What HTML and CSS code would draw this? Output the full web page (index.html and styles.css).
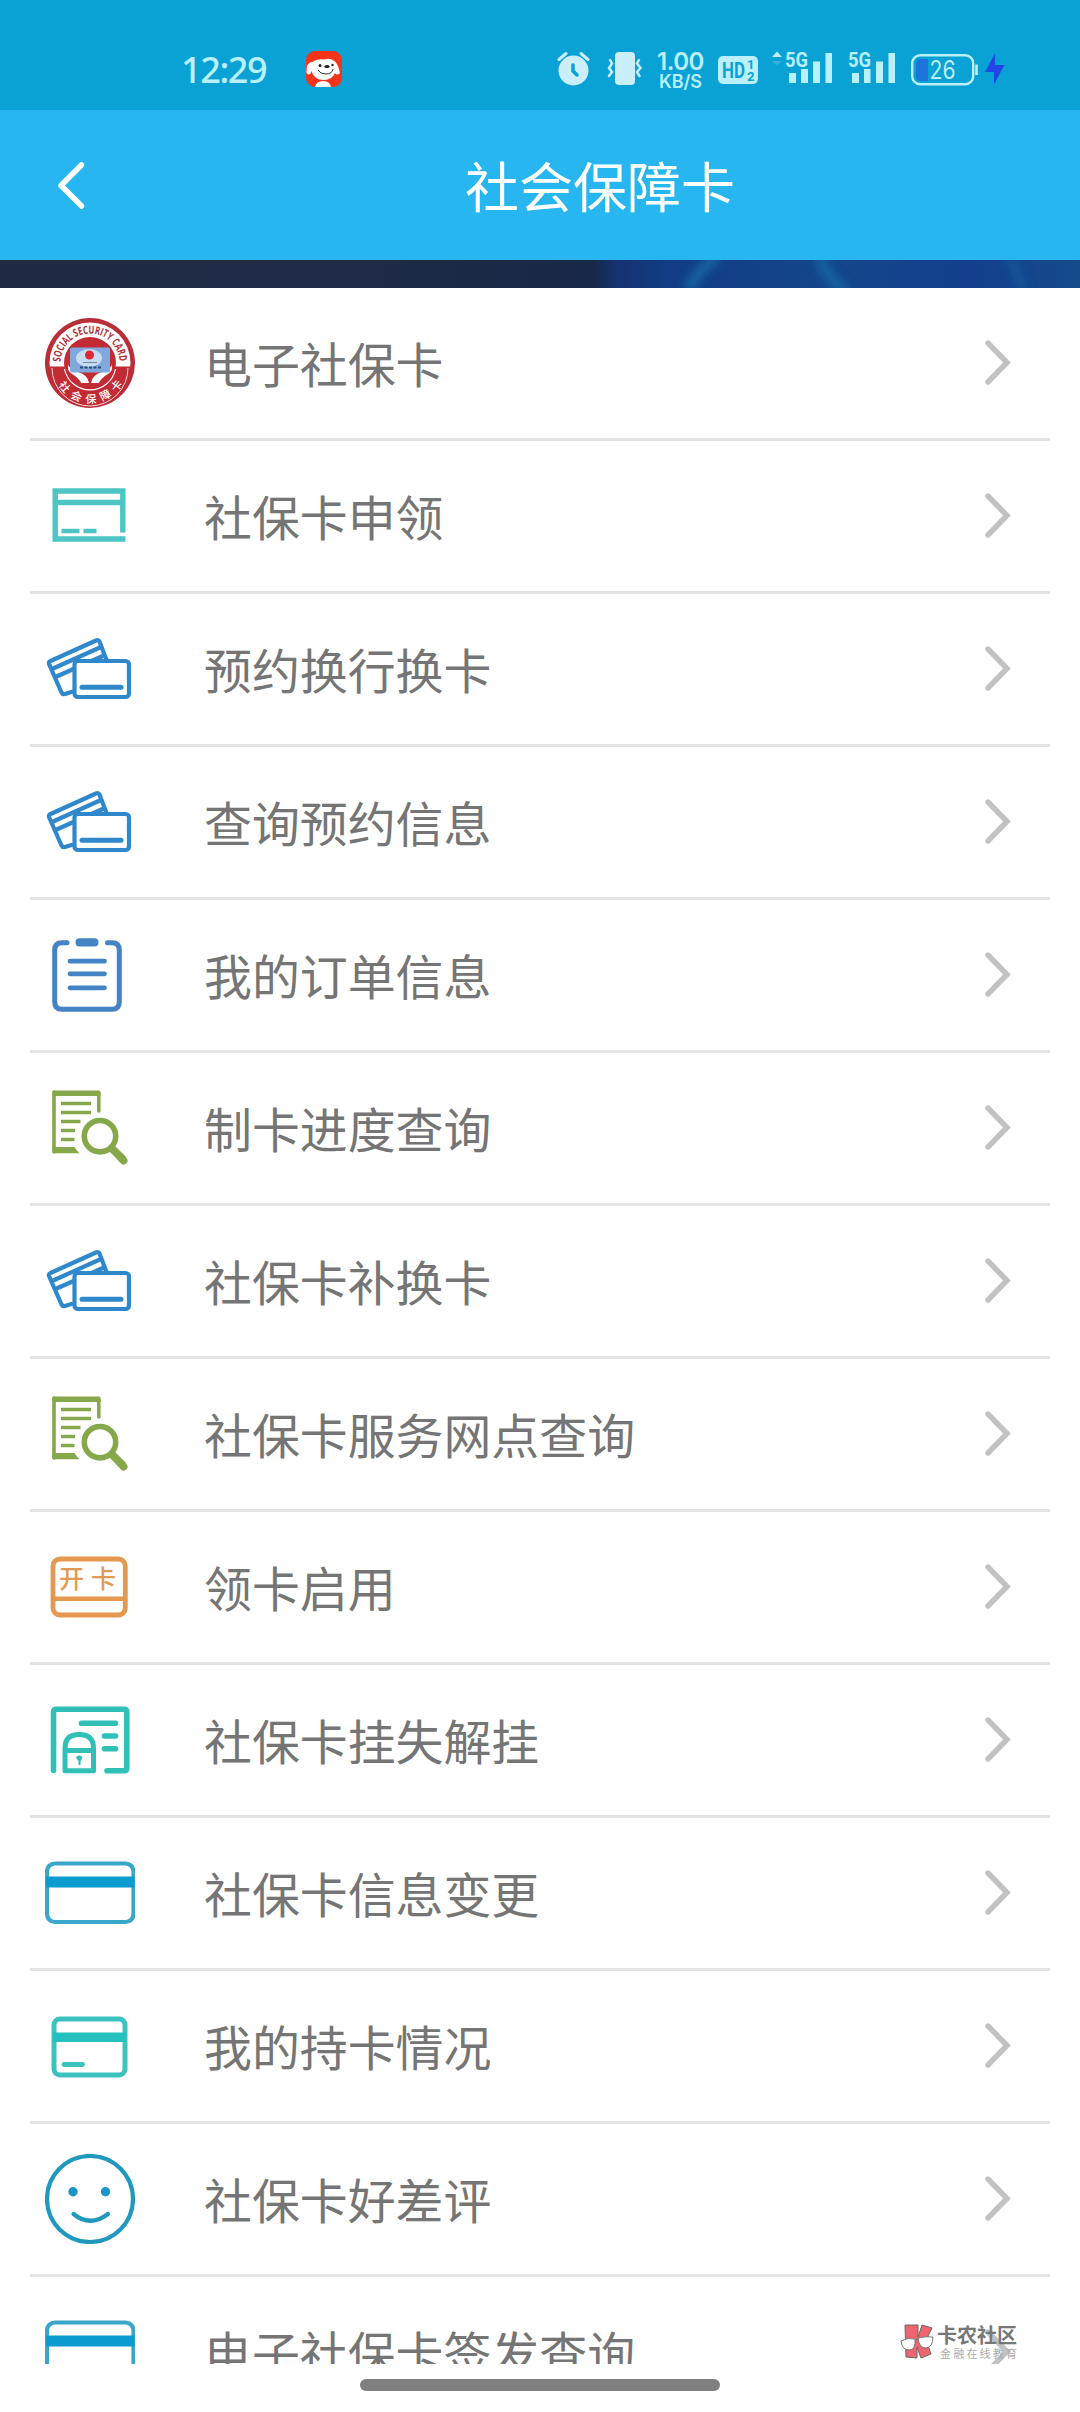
FILE: index.html
```html
<!DOCTYPE html>
<html lang="zh-CN">
<head>
    <meta charset="UTF-8">
    <meta name="viewport" content="width=device-width, initial-scale=1.0">
    <title>社会保障卡</title>
    <link rel="stylesheet" href="styles.css">
</head>
<body>
    <!-- shared icons -->
    <svg class="defs" width="0" height="0">
        <symbol id="arrow" viewBox="0 0 30 50">
            <path d="M5 5 L24 24.500 L5 44" fill="none" stroke="#c2c2c2" stroke-width="5.400" stroke-linecap="round"/>
        </symbol>
        <symbol id="cards" viewBox="0 0 90 90">
            <g fill="none" stroke="#2f88cc" stroke-width="4.200" stroke-linejoin="round">
                <path d="M28 67.500 L20 70 Q17.500 70.500 16.500 68.500 L4 40 Q3.500 38 5.500 37 L51 16.500 Q53.500 15.500 54.500 17.500 L61.500 36"/>
                <path d="M7 45 L56 23 M10.500 53 L60 31"/>
                <rect x="29.500" y="37" width="54.500" height="36" rx="3.500" fill="#fff"/>
                <path d="M37 63.300 H76" stroke-width="5" stroke-linecap="round"/>
            </g>
        </symbol>
        <symbol id="search" viewBox="0 0 90 90">
            <g fill="none" stroke="#87a84a">
                <path d="M9 9 V69 M53.800 10 V28" stroke-width="3.600" stroke-linecap="round"/>
                <path d="M9 7.500 H54 Q55.500 7.500 55.500 9.500 V13 H7.500 V9.500 Q7.500 7.500 9 7.500Z M7.500 64 H29.500 Q31.500 67.500 34.500 70.200 H9 Q7.500 70.200 7.500 68Z" fill="#87a84a" stroke="none"/>
                <path d="M16 20.500 H46 M16 29.500 H46 M16 38.500 H35.500 M16 47.500 H30 M16 56.500 H29.500" stroke-width="3.700"/>
                <circle cx="55" cy="53.200" r="15.700" stroke-width="5.600"/>
                <path d="M66.500 65 L78 76.500" stroke-width="8"/>
                <path d="M75.500 74 L78.500 77.500" stroke-width="8" stroke-linecap="round"/>
            </g>
        </symbol>
        <symbol id="bankcard" viewBox="0 0 90 90">
            <rect x="2" y="15.500" width="86.500" height="58.500" rx="8" fill="none" stroke="#3aa6c9" stroke-width="4.200"/>
            <rect x="1" y="28.500" width="88.500" height="11" fill="#0c9ccf"/>
        </symbol>
    </svg>

    <div class="status-bar">
        <div class="time">12:29</div>
        <svg class="app-icon" width="36" height="36" viewBox="0 0 36 36">
            <rect width="36" height="36" rx="9" fill="#f5331b"/>
            <path d="M6 11 Q11 7.500 18 8.500 Q25 6.500 29 10.500 Q32 13 34 22 Q31 25 29 22 Q26 29 18 29 Q8 29 5.500 20 Q4 26 0.500 22 Q0 11 6 11Z" fill="#fff"/>
            <path d="M9 36 Q10 30 17 30 Q24 30 25 36Z" fill="#fff"/>
            <path d="M12 19 Q14 23 20 23 Q26 23 27 18" fill="none" stroke="#333" stroke-width="1"/>
            <ellipse cx="21" cy="15.500" rx="2.800" ry="1.600" fill="#222"/>
            <circle cx="14" cy="14.500" r="1.500" fill="#222"/>
            <circle cx="26.500" cy="14" r="1.200" fill="#222"/>
        </svg>
        <div class="status-icons">
            <svg width="33" height="36" viewBox="0 0 33 36">
                <circle cx="16.500" cy="19.500" r="15" fill="#caeefa"/>
                <path d="M2 8.500 L9 2.500 M24 2.500 L31 8.500" stroke="#caeefa" stroke-width="3" stroke-linecap="round"/>
                <path d="M16 14 V20 L20 24" fill="none" stroke="#0aa2d5" stroke-width="3.500" stroke-linecap="round"/>
            </svg>
            <svg class="vibrate" width="36" height="36" viewBox="0 0 36 36">
                <rect x="8" y="1" width="20" height="33" rx="4" fill="#caeefa"/>
                <path d="M3 9 L5 12.500 L2 17 L5 21 L2 25 M32 9 L30 12.500 L33.500 17 L30 21 L32.500 25" fill="none" stroke="#caeefa" stroke-width="2.500" stroke-linecap="round"/>
            </svg>
            <div class="speed"><span class="num">1.00</span><span class="unit">KB/S</span></div>
            <svg class="hd" width="40" height="36" viewBox="0 0 40 36">
                <rect y="5" width="40" height="28" rx="5" fill="#b9f0fc"/>
                <text x="4" y="27" class="hd-text" textLength="23" lengthAdjust="spacingAndGlyphs">HD</text>
                <text x="29" y="18" class="sim">1</text>
                <text x="29" y="30" class="sim">2</text>
            </svg>
            <svg class="signal" width="62" height="36" viewBox="0 0 62 36">
                <path d="M0 6 L5 0.500 L10 6Z" fill="#b9edfb"/>
                <path d="M0 10 L5 14 L10 10Z" fill="#34b4dd"/>
                <text x="13" y="16" class="net" textLength="23" lengthAdjust="spacingAndGlyphs">5G</text>
                <path d="M17 22 h7 v10 h-7z M29 18 h7 v14 h-7z M41 10.500 h7 v21.500 h-7z M53.500 2 h6.500 v30 h-6.500z" fill="#b9f0fc"/>
            </svg>
            <svg class="signal2" width="49" height="36" viewBox="0 0 49 36">
                <text x="0" y="16" class="net" textLength="23" lengthAdjust="spacingAndGlyphs">5G</text>
                <path d="M4 22 h7 v10 h-7z M16 18 h6.500 v14 h-6.500z M28 10.500 h7 v21.500 h-7z M40.500 2 h6.500 v30 h-6.500z" fill="#b9f0fc"/>
            </svg>
            <svg class="battery" width="94" height="36" viewBox="0 0 94 36">
                <rect x="1.200" y="4.200" width="61" height="29" rx="8" fill="none" stroke="#b9f0fc" stroke-width="2.400"/>
                <path d="M17 8 V30 H10 Q5 30 5 25 V13 Q5 8 10 8Z" fill="#1f74dc"/>
                <path d="M65.500 13.500 V24" stroke="#b9f0fc" stroke-width="2.600"/>
                <text x="18.500" y="27.500" class="level" textLength="26" lengthAdjust="spacingAndGlyphs">26</text>
                <path d="M84 2.500 L74 21 H83 V33.500 L93.500 14 H84Z" fill="#2046e6"/>
            </svg>
        </div>
    </div>

    <div class="header">
        <svg class="back" width="30" height="48" viewBox="0 0 30 48">
            <path d="M25.500 4 L5 24.500 L25.500 45" fill="none" stroke="#fff" stroke-width="5.500" stroke-linecap="round" stroke-linejoin="round"/>
        </svg>
        <h1>社会保障卡</h1>
    </div>

    <svg class="banner" width="1080" height="28" viewBox="0 0 1080 28">
        <defs>
            <linearGradient id="night" x1="0" x2="1" y1="0" y2="0">
                <stop offset="0" stop-color="#1f2943"/>
                <stop offset="0.300" stop-color="#1f2a46"/>
                <stop offset="0.550" stop-color="#182848"/>
                <stop offset="0.570" stop-color="#153270"/>
                <stop offset="0.620" stop-color="#123d86"/>
                <stop offset="0.780" stop-color="#14468b"/>
                <stop offset="0.900" stop-color="#133f8e"/>
                <stop offset="1" stop-color="#164b8a"/>
            </linearGradient>
            <filter id="glow"><feGaussianBlur stdDeviation="5"/></filter>
        </defs>
        <rect width="1080" height="28" fill="url(#night)"/>
        <g fill="none" stroke="#1463a1" stroke-width="11" filter="url(#glow)">
            <path d="M688 30 Q698 10 718 -4"/>
            <path d="M820 -4 Q824 16 846 32"/>
            <path d="M1010 -4 L1024 30" opacity="0.500"/>
        </g>
    </svg>

    <div class="list">
        <div class="item">
            <svg class="icon" viewBox="0 0 90 90">
                <circle cx="45" cy="45" r="45" fill="#b92f39"/>
                <circle cx="45" cy="45" r="40.500" fill="#fff"/>
                <path d="M4.500 48.500 H85.500 A40.500 40.500 0 0 1 4.500 48.500Z" fill="#c22a34"/>
                <path d="M7 50 A38 38 0 0 0 83 50" fill="none" stroke="#f6dcdc" stroke-width="1"/>
                <circle cx="45" cy="45" r="26" fill="#c22a34"/>
                <path d="M19.500 51 A26 26 0 0 0 70.500 51" fill="none" stroke="#fff" stroke-width="1.200"/>
                <path d="M24 46 Q22 50 33 54 Q43 57 44 65 H36 Q34 60 27 56 Q21 52 24 46Z M66 46 Q68 50 57 54 Q47 57 46 65 H54 Q56 60 63 56 Q69 52 66 46Z" fill="#fff"/>
                <rect x="25" y="29.500" width="40" height="25" rx="2" fill="#7fa9dc"/>
                <ellipse cx="44" cy="40" rx="13" ry="9" fill="#c7dcf3"/>
                <circle cx="44.500" cy="37" r="4.500" fill="#dd2837"/>
                <path d="M38 44.500 H52" stroke="#758aa8" stroke-width="1"/>
                <path d="M35 49.500 H56" stroke="#2b4872" stroke-width="2" stroke-dasharray="3 1.500"/>
                <path id="arcTop" d="M15.500 45 A29.500 29.500 0 0 1 74.500 45" fill="none"/>
                <path id="arcBottom" d="M8 48 A37 37 0 0 0 82 48" fill="none"/>
                <text class="seal-en"><textPath href="#arcTop" startOffset="1" textLength="90" lengthAdjust="spacingAndGlyphs">SOCIAL SECURITY CARD</textPath></text>
                <text class="seal-cn"><textPath href="#arcBottom" startOffset="20" textLength="78">社会保障卡</textPath></text>
            </svg>
            <span class="name">电子社保卡</span>
            <svg class="arrow"><use href="#arrow"/></svg>
        </div>
        <div class="item">
            <svg class="icon" viewBox="0 0 90 90">
                <g fill="none" stroke="#4cc5c4" stroke-width="5.400">
                    <path d="M80.500 68 H10.200 V20 H77.800 V61.500"/>
                    <path d="M10 31.500 H78" stroke-width="5.500"/>
                    <path d="M16.500 60 H34.500 M38.500 60 H51.500" stroke-width="4.400"/>
                </g>
            </svg>
            <span class="name">社保卡申领</span>
            <svg class="arrow"><use href="#arrow"/></svg>
        </div>
        <div class="item">
            <svg class="icon"><use href="#cards"/></svg>
            <span class="name">预约换行换卡</span>
            <svg class="arrow"><use href="#arrow"/></svg>
        </div>
        <div class="item">
            <svg class="icon"><use href="#cards"/></svg>
            <span class="name">查询预约信息</span>
            <svg class="arrow"><use href="#arrow"/></svg>
        </div>
        <div class="item">
            <svg class="icon" viewBox="0 0 90 90">
                <g fill="none" stroke="#4484c4" stroke-width="5" stroke-linecap="round">
                    <path d="M22 12.700 H17 Q9.700 12.700 9.700 20 V72 Q9.700 79.300 17 79.300 H67 Q74.300 79.300 74.300 72 V20 Q74.300 12.700 67 12.700 H62.500"/>
                    <path d="M25 31.200 H59.500 M25 43.800 H59.500 M25 57.800 H59.500" stroke-width="4.800"/>
                </g>
                <rect x="30.500" y="8.200" width="23" height="8.200" rx="4" fill="#4484c4"/>
            </svg>
            <span class="name">我的订单信息</span>
            <svg class="arrow"><use href="#arrow"/></svg>
        </div>
        <div class="item">
            <svg class="icon"><use href="#search"/></svg>
            <span class="name">制卡进度查询</span>
            <svg class="arrow"><use href="#arrow"/></svg>
        </div>
        <div class="item">
            <svg class="icon"><use href="#cards"/></svg>
            <span class="name">社保卡补换卡</span>
            <svg class="arrow"><use href="#arrow"/></svg>
        </div>
        <div class="item">
            <svg class="icon"><use href="#search"/></svg>
            <span class="name">社保卡服务网点查询</span>
            <svg class="arrow"><use href="#arrow"/></svg>
        </div>
        <div class="item">
            <svg class="icon" viewBox="0 0 90 90">
                <g fill="none" stroke="#e39a50" stroke-width="4.800">
                    <rect x="8" y="17" width="72.300" height="56" rx="7"/>
                    <path d="M8 56.800 H80" stroke-width="4.400"/>
                </g>
                <text x="14" y="46" class="open-card">开卡</text>
            </svg>
            <span class="name">领卡启用</span>
            <svg class="arrow"><use href="#arrow"/></svg>
        </div>
        <div class="item">
            <svg class="icon" viewBox="0 0 90 90">
                <g fill="none" stroke="#30c0b8" stroke-width="5.600" stroke-linecap="round" stroke-linejoin="round">
                    <path d="M8.500 75.500 V17 Q8.500 14.200 11.500 14.200 H79 Q81.800 14.200 81.800 17 V73 Q81.800 75.700 79 75.700 H62"/>
                    <path d="M36.500 28.300 H70.500 M59.500 41 H70.500 M59.500 53.700 H70.500"/>
                    <path d="M20 75.700 V53 Q20 39.500 34 39.500 Q48.500 39.500 48.500 53 V75.700Z M20 55.500 H48" stroke-width="5"/>
                </g>
                <path d="M31 63 A3.400 3.400 0 0 1 37.500 63 L35.500 66 V70 H33.500 V66Z" fill="#30c0b8"/>
            </svg>
            <span class="name">社保卡挂失解挂</span>
            <svg class="arrow"><use href="#arrow"/></svg>
        </div>
        <div class="item">
            <svg class="icon"><use href="#bankcard"/></svg>
            <span class="name">社保卡信息变更</span>
            <svg class="arrow"><use href="#arrow"/></svg>
        </div>
        <div class="item">
            <svg class="icon" viewBox="0 0 90 90">
                <rect x="9" y="18" width="71" height="56" rx="6" fill="none" stroke="#3cc2bf" stroke-width="5"/>
                <rect x="8" y="31.500" width="73" height="9.500" fill="#25c1be"/>
                <path d="M19 63.500 H37.500" stroke="#3cc2bf" stroke-width="4.800" stroke-linecap="round"/>
            </svg>
            <span class="name">我的持卡情况</span>
            <svg class="arrow"><use href="#arrow"/></svg>
        </div>
        <div class="item">
            <svg class="icon" viewBox="0 0 90 90">
                <circle cx="45" cy="45" r="43" fill="none" stroke="#2199bf" stroke-width="4.200"/>
                <circle cx="28" cy="37.700" r="4.700" fill="#1b95c6"/>
                <circle cx="60.500" cy="37.700" r="4.700" fill="#1b95c6"/>
                <path d="M28.500 60 Q45 73.500 63 60" fill="none" stroke="#2199bf" stroke-width="4.200" stroke-linecap="round"/>
            </svg>
            <span class="name">社保卡好差评</span>
            <svg class="arrow"><use href="#arrow"/></svg>
        </div>
        <div class="item">
            <svg class="icon"><use href="#bankcard"/></svg>
            <span class="name">电子社保卡签发查询</span>
            <svg class="arrow"><use href="#arrow"/></svg>
        </div>
    </div>

    <div class="nav-bar"><div class="handle"></div></div>

    <div class="watermark">
        <svg width="34" height="36" viewBox="0 0 34 36">
            <path d="M5 1 H18 V13 L22 1 L32 4 L26 16 L31 30 L21 34 L17 23 V34 L6 33Z" fill="#ee6572" stroke="#6d6565" stroke-width="1"/>
            <path d="M1 17 Q8 13 15 15 Q16 26 9 26 Q2 26 1 17Z M18 14 Q26 12 33 13 Q33 23 26 24 Q19 24 18 14Z" fill="#fff" stroke="#777" stroke-width="1"/>
            <path d="M15 16 L18 15" stroke="#777"/>
        </svg>
        <div class="mark-text">
            <span class="mark-name">卡农社区</span>
            <span class="mark-sub">金融在线教育</span>
        </div>
    </div>
</body>
</html>
```
FILE: styles.css
```css
body {
    margin: 0;
    height: 2412px;
    display: flex;
    flex-direction: column;
    overflow: hidden;
    background-color: #fff;
    font-family: "Noto Sans CJK SC", sans-serif;
}
.defs {
    position: absolute;
}
.status-bar {
    height: 110px;
    flex: none;
    display: flex;
    align-items: flex-start;
    box-sizing: border-box;
    padding: 51px 75px 0 181px;
    background-color: #0aa2d5;
    color: #b9f0fc;
}
.time {
    width: 125px;
    font-family: "Noto Sans", sans-serif;
    font-size: 36px;
    font-weight: 500;
    line-height: 37px;
    letter-spacing: -1.4px;
}
.status-icons {
    display: flex;
    margin-left: auto;
}
.vibrate {
    margin-left: 17px;
}
.speed {
    width: 49px;
    margin-left: 13px;
    display: flex;
    flex-direction: column;
    align-items: center;
    font-family: Inter, sans-serif;
    font-weight: 600;
}
.speed .num {
    font-size: 24px;
    line-height: 21px;
    letter-spacing: -0.5px;
}
.speed .unit {
    font-size: 18px;
    line-height: 19px;
}
.hd {
    margin-left: 13px;
}
.hd-text {
    font: bold 22px Roboto, sans-serif;
    fill: #0aa2d5;
}
.sim {
    font: bold 13px Roboto, sans-serif;
    fill: #0aa2d5;
}
.signal {
    margin-left: 14px;
}
.signal2 {
    margin-left: 14px;
}
.battery {
    margin-left: 14px;
}
.net {
    font: bold 20px Roboto, sans-serif;
    fill: #b9f0fc;
}
.level {
    font: 25px Inter, sans-serif;
    fill: #b9f0fc;
}
.header {
    height: 150px;
    flex: none;
    display: flex;
    align-items: center;
    box-sizing: border-box;
    padding-left: 56px;
    background-color: #27b6ef;
}
h1 {
    flex: 1;
    margin: 0;
    padding-left: 34px;
    color: #fff;
    font-size: 54px;
    font-weight: normal;
    line-height: 80px;
    text-align: center;
}
.banner {
    display: block;
    flex: none;
}
.list {
    height: 2076px;
    flex: none;
    overflow: hidden;
    padding: 0 30px;
}
.item {
    height: 150px;
    display: flex;
    align-items: center;
    padding: 0 37px 0 15px;
    border-bottom: 3px solid #e4e4e4;
}
.icon {
    width: 90px;
    height: 90px;
    flex: none;
}
.name {
    flex: 1;
    margin-left: 69px;
    padding-bottom: 2px;
    color: #757575;
    font-size: 47.9px;
    line-height: 70px;
    white-space: nowrap;
}
.arrow {
    width: 30px;
    height: 50px;
}
.seal-en {
    font: bold 11px "Open Sans", sans-serif;
    fill: #b4303a;
}
.seal-cn {
    font-size: 11px;
    font-weight: 500;
    fill: #fff;
}
.open-card {
    font-size: 25px;
    font-weight: 500;
    letter-spacing: 7px;
    fill: #e39a50;
}
.nav-bar {
    flex: 1;
    display: flex;
    justify-content: center;
    padding-top: 15px;
}
.handle {
    width: 360px;
    height: 12px;
    border-radius: 6px;
    background-color: #808080;
}
/* floats over the last row */
.watermark {
    position: absolute;
    left: 900px;
    top: 2324px;
    display: flex;
    gap: 3px;
}
.mark-text {
    display: flex;
    flex-direction: column;
    white-space: nowrap;
}
.mark-name {
    color: #777;
    font-size: 20px;
    font-weight: bold;
    line-height: 21px;
}
.mark-sub {
    padding: 2px 0 0 3px;
    color: #aaa;
    font-size: 11px;
    letter-spacing: 2.2px;
    line-height: 13px;
}
```
